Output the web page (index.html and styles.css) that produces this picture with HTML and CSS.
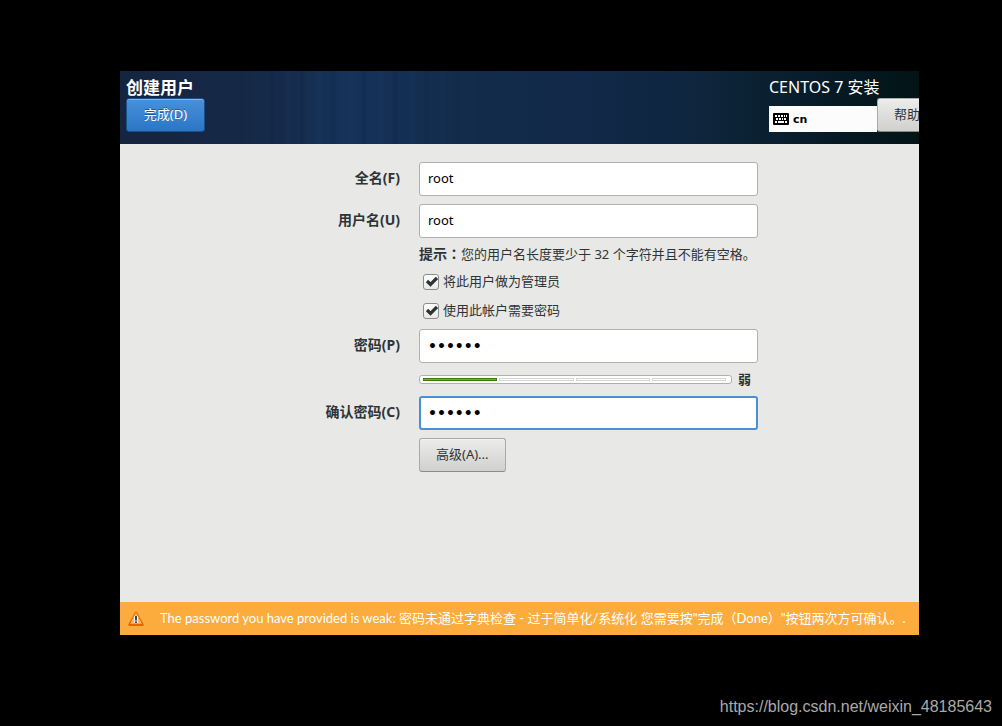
FILE: index.html
```html
<!DOCTYPE html>
<html lang="zh-CN">
<head>
<meta charset="utf-8">
<title>创建用户</title>
<link rel="stylesheet" href="styles.css">
</head>
<body>
<main class="window">
  <header class="header">
    <div class="header-start">
      <h1 class="title">创建用户</h1>
      <button class="btn btn-primary" type="button">完成(D)</button>
    </div>
    <div class="header-end">
      <p class="product">CENTOS 7 安装</p>
      <div class="tools">
        <button class="keyboard" type="button">
          <svg class="keyboard-icon" viewBox="0 0 16 12" aria-hidden="true">
            <rect width="16" height="12" rx="1" fill="#000"/>
            <path d="M2 3h2M5 3h2M8 3h2M11 3h1M13 3h1M3 6h2M6 6h2M9 6h1M11 6h2M2 9h2M5 9h6M12 9h2" stroke="#fff" stroke-width="2"/>
          </svg>
          <span>cn</span>
        </button>
        <button class="btn btn-help" type="button">帮助</button>
      </div>
    </div>
  </header>
  <form class="form">
    <label class="label" for="fullname">全名(F)</label>
    <input class="field" id="fullname" type="text" value="root">
    <label class="label" for="username">用户名(U)</label>
    <input class="field" id="username" type="text" value="root">
    <p class="hint"><b class="hint-title" lang="zh-TW">提示：</b>您的用户名长度要少于 32 个字符并且不能有空格。</p>
    <label class="check"><input class="check-box" type="checkbox" checked>将此用户做为管理员</label>
    <label class="check"><input class="check-box" type="checkbox" checked>使用此帐户需要密码</label>
    <label class="label" for="password">密码(P)</label>
    <input class="field field-password" id="password" type="password" value="abcdef">
    <div class="strength">
      <div class="meter">
        <span class="meter-step meter-step-on"></span>
        <span class="meter-step"></span>
        <span class="meter-step"></span>
        <span class="meter-step"></span>
      </div>
      <span class="strength-text">弱</span>
    </div>
    <label class="label" for="confirm">确认密码(C)</label>
    <input class="field field-password field-active" id="confirm" type="password" value="abcdef">
    <button class="btn btn-advanced" type="button">高级(A)...</button>
  </form>
  <div class="warning" role="alert">
    <svg class="warning-icon" viewBox="0 0 16 16" aria-hidden="true">
      <defs><linearGradient id="tri" x1="0" y1="0" x2="0" y2="1"><stop offset="0" stop-color="#f57900"/><stop offset="1" stop-color="#e06500"/></linearGradient></defs>
      <path d="M7 .9Q8 0 9 .9L15.6 13.2Q16 14.900 14.500 15H1.500Q0 14.900.4 13.200Z" fill="url(#tri)"/>
      <path d="M8 2L13.800 12.800H2.200Z" fill="#f8b878"/>
      <path d="M8 5v4.500M8 10.500v1.500" stroke="#fff" stroke-width="4"/>
      <path d="M8 5v4.500M8 10.500v1.500" stroke="#444" stroke-width="2"/>
    </svg>
    <span class="warning-text">The password you have provided is weak: 密码未通过字典检查 - 过于简单化/系统化 您需要按"完成（Done）"按钮两次方可确认。.</span>
  </div>
</main>
<footer class="source">https://blog.csdn.net/weixin_48185643</footer>
</body>
</html>
```

FILE: styles.css
```css
* {
  box-sizing: border-box;
}

body {
  display: flex;
  flex-direction: column;
  min-height: 100vh;
  margin: 0;
  padding-top: 71px;
  background: #000;
  color: #2e3436;
  font: 13px/17px "Noto Sans", "Noto Sans CJK SC", sans-serif;
}

button,
input {
  margin: 0;
  color: inherit;
  font: inherit;
}

.window {
  display: flex;
  flex: 1;
  flex-direction: column;
  margin: 0 83px 0 120px;
  overflow: hidden;
  background: #e8e8e6;
}

.header {
  display: flex;
  justify-content: space-between;
  min-height: 73px;
  padding: 6px 0 12px 6px;
  background:
    linear-gradient(90deg, #15243f 0%, #152846 12%, transparent 24% 36%, #122b4a 48%, #12294a 56%, #0f2640 70%, #0a2030 82%, #061a24 90%, #031416 100%),
    repeating-linear-gradient(90deg, transparent 0 9px, rgba(30, 75, 125, 0.1) 12px 14px, transparent 17px 24px, rgba(5, 15, 55, 0.13) 26px 28px, transparent 31px),
    linear-gradient(90deg, #152846 15%, #163258 28%, #122b4a 48%);
}

.title,
.product {
  margin: 0;
  color: #fff;
  font-size: 17px;
  line-height: 21px;
}

.product {
  font-size: 16px;
}

.header-end {
  width: 150px;
}

.tools {
  display: flex;
  align-items: flex-end;
}

.keyboard {
  display: flex;
  flex: none;
  align-items: center;
  gap: 4px;
  width: 108px;
  height: 26px;
  padding: 0 4px;
  border: 0;
  background: #fcfcfc;
  color: #000;
  font: bold 11px/17px "DejaVu Sans", sans-serif;
}

.keyboard-icon {
  width: 16px;
  height: 12px;
}

.btn {
  height: 34px;
  padding: 0 16px 2px;
  border: 1px solid #a9a9a6;
  border-bottom-color: #8b8b88;
  border-radius: 3px;
  background: linear-gradient(#ececeb, #d0d0ce);
  box-shadow: inset 0 1px #f3f3f2;
  white-space: nowrap;
}

.btn-primary {
  min-width: 79px;
  border-color: #1c5187;
  background: linear-gradient(#4a90d9, #2a76c6);
  box-shadow: inset 0 1px #86b5e5;
  color: #fff;
  text-shadow: 0 -1px #1f5c99;
}

.btn-help {
  flex: none;
}

.form {
  display: grid;
  flex: 1;
  grid-template-columns: 1fr 339px;
  align-content: start;
  align-items: center;
  gap: 8px 18px;
  padding: 18px 161px 18px 0;
}

.label {
  grid-column: 1;
  padding: 0 1px 3px 0;
  font-size: 14px;
  font-weight: bold;
  text-align: right;
}

.field {
  grid-column: 2;
  width: 100%;
  height: 34px;
  padding: 0 8px 2px;
  border: 1px solid #b0b0ae;
  border-radius: 3px;
  outline: 0;
  background: #fff;
  color: #000;
}

.field-password {
  padding-bottom: 0;
  font: bold 14px/17px "DejaVu Sans", sans-serif;
}

.field-active {
  padding-left: 7px;
  border: 2px solid #4a90d9;
}

.hint {
  grid-column: 2;
  height: 17px;
  margin: 0;
  line-height: 16px;
  white-space: nowrap;
}

.hint-title {
  font-family: "Noto Sans CJK TC", sans-serif;
  font-size: 14px;
  line-height: 1;
}

.check {
  display: flex;
  grid-column: 2;
  align-items: center;
  gap: 4px;
  height: 21px;
  padding-left: 4px;
}

.check-box {
  width: 16px;
  height: 16px;
  border: 1px solid #8b8e8a;
  border-radius: 3px;
  appearance: none;
  background: linear-gradient(#fff, #e8e8e6);
}

.check-box:checked {
  background: url("data:image/svg+xml,%3Csvg xmlns='http://www.w3.org/2000/svg' viewBox='0 0 14 14'%3E%3Cpath d='M3 6L6.500 9.500L13 3' fill='none' stroke='%232e3436' stroke-width='3.200'/%3E%3C/svg%3E") center / 14px 14px no-repeat, linear-gradient(#fff, #e8e8e6);
}

.strength {
  display: flex;
  grid-column: 2;
  align-items: center;
  gap: 6px;
  padding-right: 7px;
}

.meter {
  display: flex;
  flex: 1;
  gap: 2px;
  height: 9px;
  padding: 2px 5px 2px 3px;
  border: 1px solid #b0b0ae;
  border-radius: 3px;
  background: #fff;
}

.meter-step {
  flex: 1;
  border: 1px solid #d6d6d4;
}

.meter-step-on {
  border-color: #3f7a08;
  background: #73b51e;
}

.strength-text {
  font-weight: bold;
}

.btn-advanced {
  grid-column: 2;
  justify-self: start;
}

.warning {
  display: flex;
  align-items: center;
  gap: 16px;
  min-height: 33px;
  padding: 0 8px;
  background: #fbac3d;
  color: #fff;
}

.warning-icon {
  flex: none;
  width: 16px;
  height: 16px;
}

.warning-text {
  font-family: Lato, "Noto Sans CJK SC", sans-serif;
  white-space: nowrap;
}

.source {
  padding: 62px 10px 9px;
  color: #aaa;
  font: 16px/20px "Liberation Sans", Arial, sans-serif;
  text-align: right;
}
```
